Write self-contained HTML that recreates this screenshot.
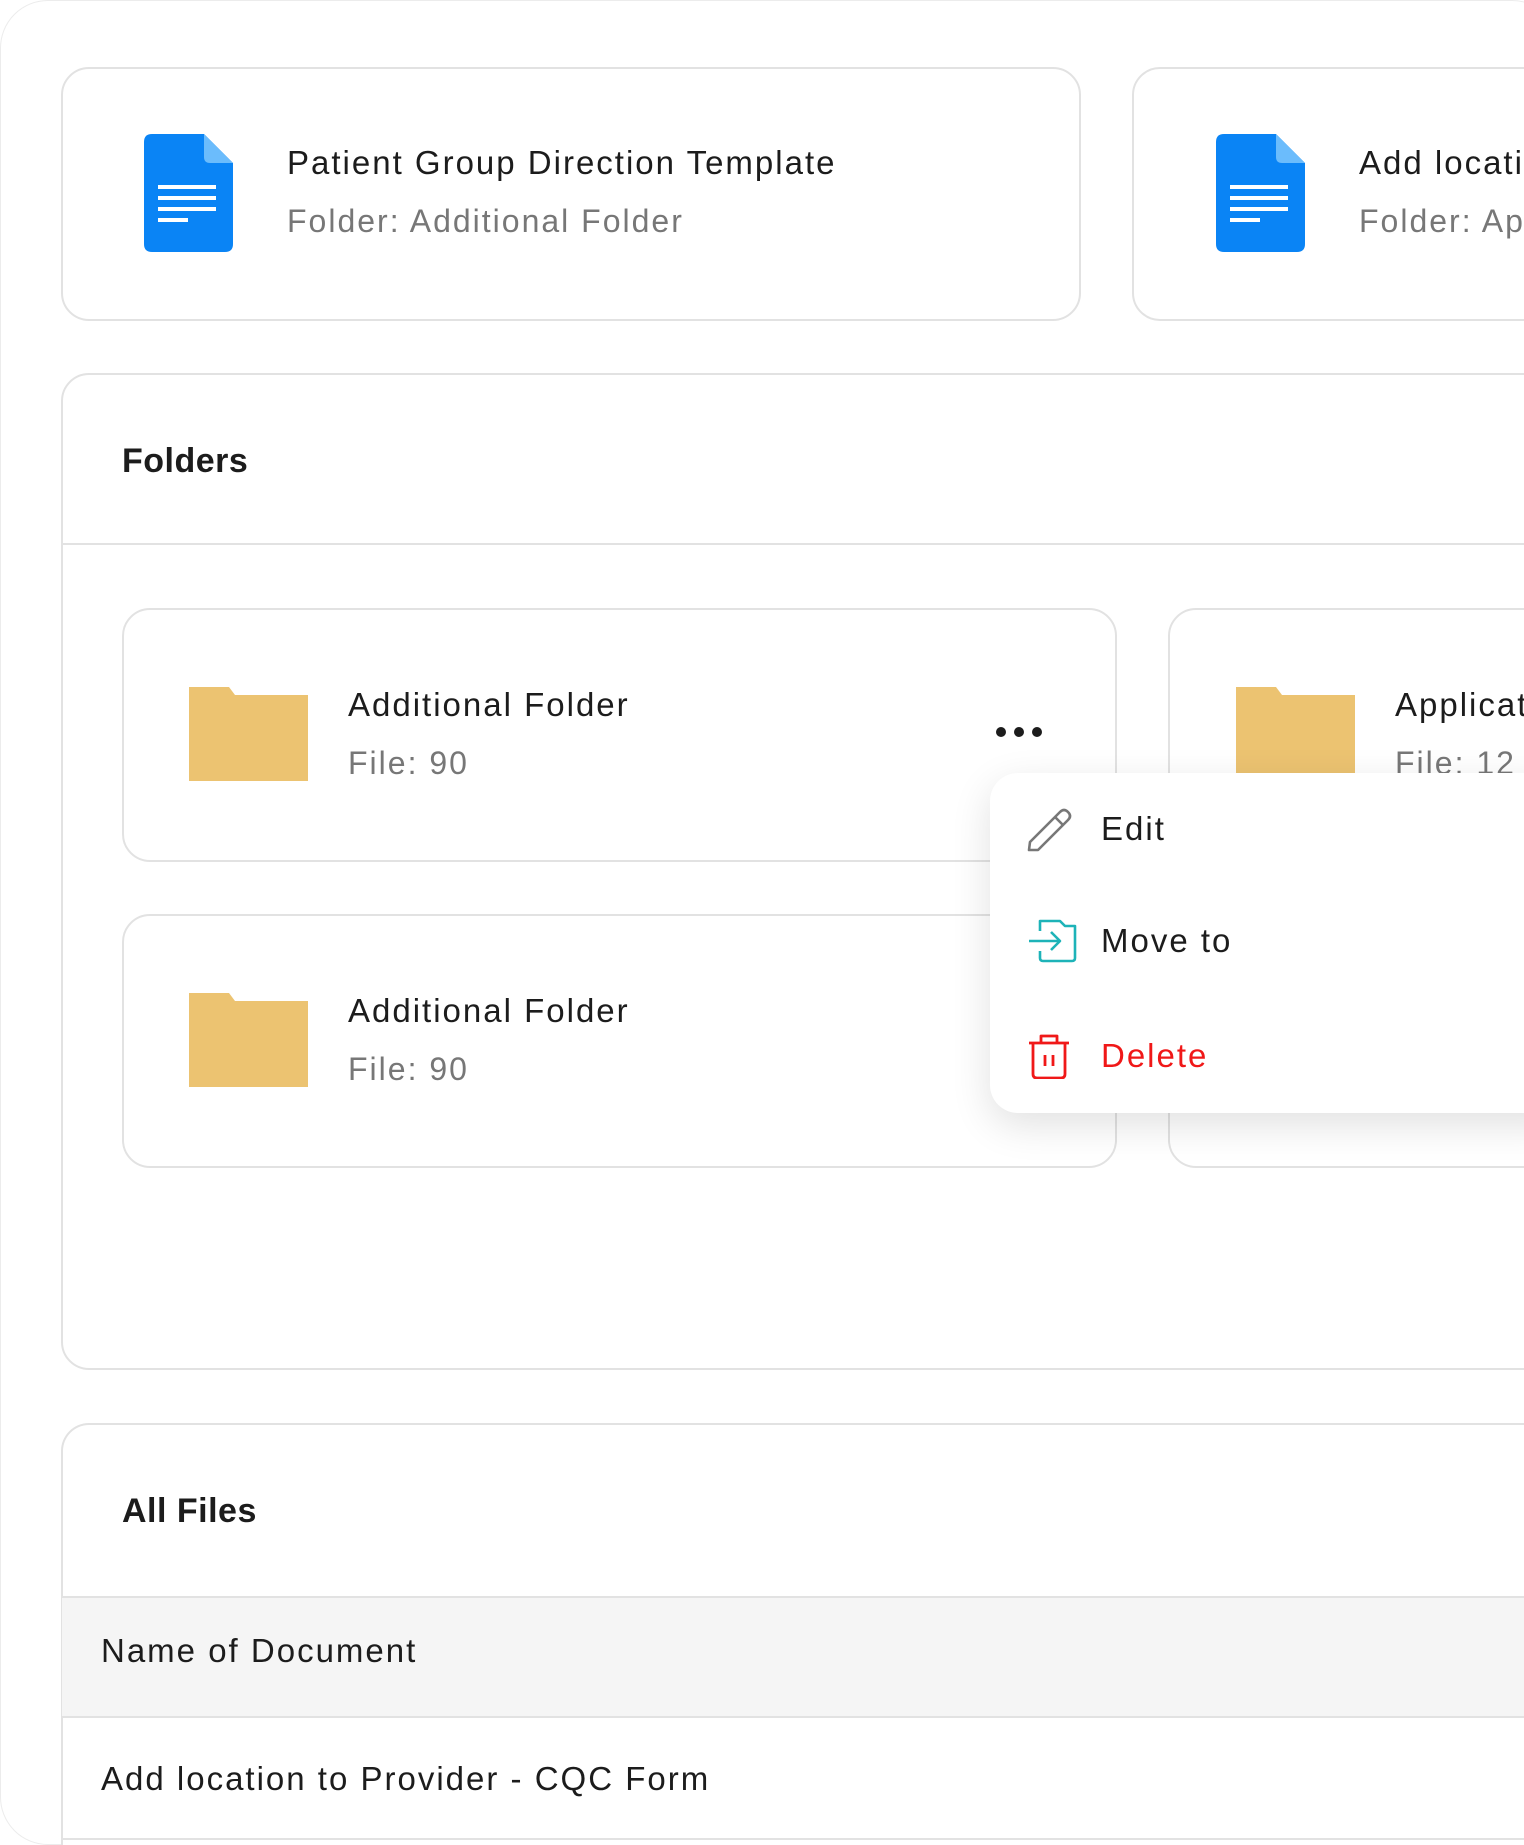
<!DOCTYPE html>
<html style="overflow:hidden;width:1524px;height:1845px"><head><style>
*{box-sizing:border-box;margin:0;padding:0}
html,body{width:1524px;height:1845px;overflow:hidden;background:#fff}
body{font-family:"Liberation Sans",sans-serif}
#w{position:relative;width:1524px;height:1845px;overflow:hidden}
.frame{position:absolute;left:0;top:0;width:1560px;height:1845px;border:1px solid #ececec;border-radius:48px}
.card{position:absolute;border:2px solid #e2e2e2;border-radius:28px;background:#fff}
.t{position:absolute;font-size:33px;color:#1c1c1c;white-space:nowrap;letter-spacing:2px}
.s{position:absolute;font-size:32px;color:#777;white-space:nowrap;letter-spacing:2px}
.h{position:absolute;font-size:34px;font-weight:bold;color:#1c1c1c;letter-spacing:0.5px}
.line{position:absolute;height:2px;background:#e2e2e2}
.folder{position:absolute;width:119px;height:94px}
</style></head><body><div id="w">
<div class="frame"></div>

<div class="card" style="left:61px;top:67px;width:1020px;height:254px"></div>
<div class="card" style="left:1132px;top:67px;width:480px;height:254px"></div>

<svg style="position:absolute;left:144px;top:134px" width="89" height="118" viewBox="0 0 89 118">
<path d="M8 0H60L89 29V110Q89 118 81 118H8Q0 118 0 110V8Q0 0 8 0Z" fill="#0a84f5"/>
<path d="M60 0L89 29H66Q60 29 60 23Z" fill="#6bbcfc"/>
<rect x="14" y="51" width="58" height="4" fill="#fff"/><rect x="14" y="62" width="58" height="4" fill="#fff"/><rect x="14" y="73" width="58" height="4" fill="#fff"/><rect x="14" y="84" width="30" height="4" fill="#fff"/>
</svg>
<div class="t" style="left:287px;top:144px">Patient Group Direction Template</div>
<div class="s" style="left:287px;top:203px">Folder: Additional Folder</div>

<svg style="position:absolute;left:1216px;top:134px" width="89" height="118" viewBox="0 0 89 118">
<path d="M8 0H60L89 29V110Q89 118 81 118H8Q0 118 0 110V8Q0 0 8 0Z" fill="#0a84f5"/>
<path d="M60 0L89 29H66Q60 29 60 23Z" fill="#6bbcfc"/>
<rect x="14" y="51" width="58" height="4" fill="#fff"/><rect x="14" y="62" width="58" height="4" fill="#fff"/><rect x="14" y="73" width="58" height="4" fill="#fff"/><rect x="14" y="84" width="30" height="4" fill="#fff"/>
</svg>
<div class="t" style="left:1359px;top:144px">Add location</div>
<div class="s" style="left:1359px;top:203px">Folder: Ap</div>

<div class="card" style="left:61px;top:373px;width:1500px;height:997px"></div>
<div class="h" style="left:122px;top:442px">Folders</div>
<div class="line" style="left:62px;top:543px;width:1462px"></div>

<div class="card" style="left:122px;top:608px;width:995px;height:254px"></div>
<div class="card" style="left:1168px;top:608px;width:400px;height:254px"></div>
<div class="card" style="left:122px;top:914px;width:995px;height:254px"></div>
<div class="card" style="left:1168px;top:914px;width:400px;height:254px"></div>

<svg class="folder" style="left:189px;top:687px" viewBox="0 0 119 94"><path d="M0 0H40L46 8H119V94H0Z" fill="#ecc371"/></svg>
<div class="t" style="left:348px;top:686px">Additional Folder</div>
<div class="s" style="left:348px;top:745px">File: 90</div>
<div style="position:absolute;left:996px;top:727px;width:48px;height:10px">
<span style="position:absolute;left:0;width:10px;height:10px;border-radius:50%;background:#1c1c1c"></span>
<span style="position:absolute;left:18px;width:10px;height:10px;border-radius:50%;background:#1c1c1c"></span>
<span style="position:absolute;left:36px;width:10px;height:10px;border-radius:50%;background:#1c1c1c"></span></div>

<svg class="folder" style="left:1236px;top:687px" viewBox="0 0 119 94"><path d="M0 0H40L46 8H119V94H0Z" fill="#ecc371"/></svg>
<div class="t" style="left:1395px;top:686px">Applicat</div>
<div class="s" style="left:1395px;top:745px">File: 12</div>

<svg class="folder" style="left:189px;top:993px" viewBox="0 0 119 94"><path d="M0 0H40L46 8H119V94H0Z" fill="#ecc371"/></svg>
<div class="t" style="left:348px;top:992px">Additional Folder</div>
<div class="s" style="left:348px;top:1051px">File: 90</div>

<div style="position:absolute;left:990px;top:773px;width:580px;height:340px;background:#fff;border-radius:28px;box-shadow:0 12px 40px rgba(0,0,0,0.12)"></div>
<svg style="position:absolute;left:1026px;top:806px" width="48" height="48" viewBox="0 0 48 48" fill="none" stroke="#777" stroke-width="2.6" stroke-linejoin="round"><path d="M3 44L4 36L34 6Q38 2 42 6Q46 10 42 14L12 44Z"/><path d="M29 11L37 19"/></svg>
<div class="t" style="left:1101px;top:810px">Edit</div>
<svg style="position:absolute;left:1028px;top:918px" width="52" height="46" viewBox="0 0 52 46" fill="none" stroke="#1db3b8" stroke-width="2.6" stroke-linejoin="round"><path d="M12 13V3H32L37 8H47V40Q47 43 44 43H15Q12 43 12 40V33"/><path d="M1 23H32M23 14L32 23L23 32"/></svg>
<div class="t" style="left:1101px;top:922px">Move to</div>
<svg style="position:absolute;left:1028px;top:1033px" width="42" height="46" viewBox="0 0 42 46" fill="none" stroke="#f01818" stroke-width="2.8" stroke-linejoin="round"><path d="M1 10H41M13 10V3H29V10M5 10V41Q5 45 9 45H33Q37 45 37 41V10M17 22V33M25 22V33"/></svg>
<div class="t" style="left:1101px;top:1037px;color:#f01818">Delete</div>

<div class="card" style="left:61px;top:1423px;width:1500px;height:422px;border-bottom:none;border-radius:28px 28px 0 0"></div>
<div class="h" style="left:122px;top:1492px">All Files</div>
<div style="position:absolute;left:62px;top:1596px;width:1462px;height:122px;background:#f5f5f5;border-top:2px solid #e2e2e2;border-bottom:2px solid #e2e2e2"></div>
<div class="t" style="left:101px;top:1632px">Name of Document</div>
<div class="t" style="left:101px;top:1760px">Add location to Provider - CQC Form</div>
<div class="line" style="left:62px;top:1838px;width:1462px"></div>
</div></body></html>
